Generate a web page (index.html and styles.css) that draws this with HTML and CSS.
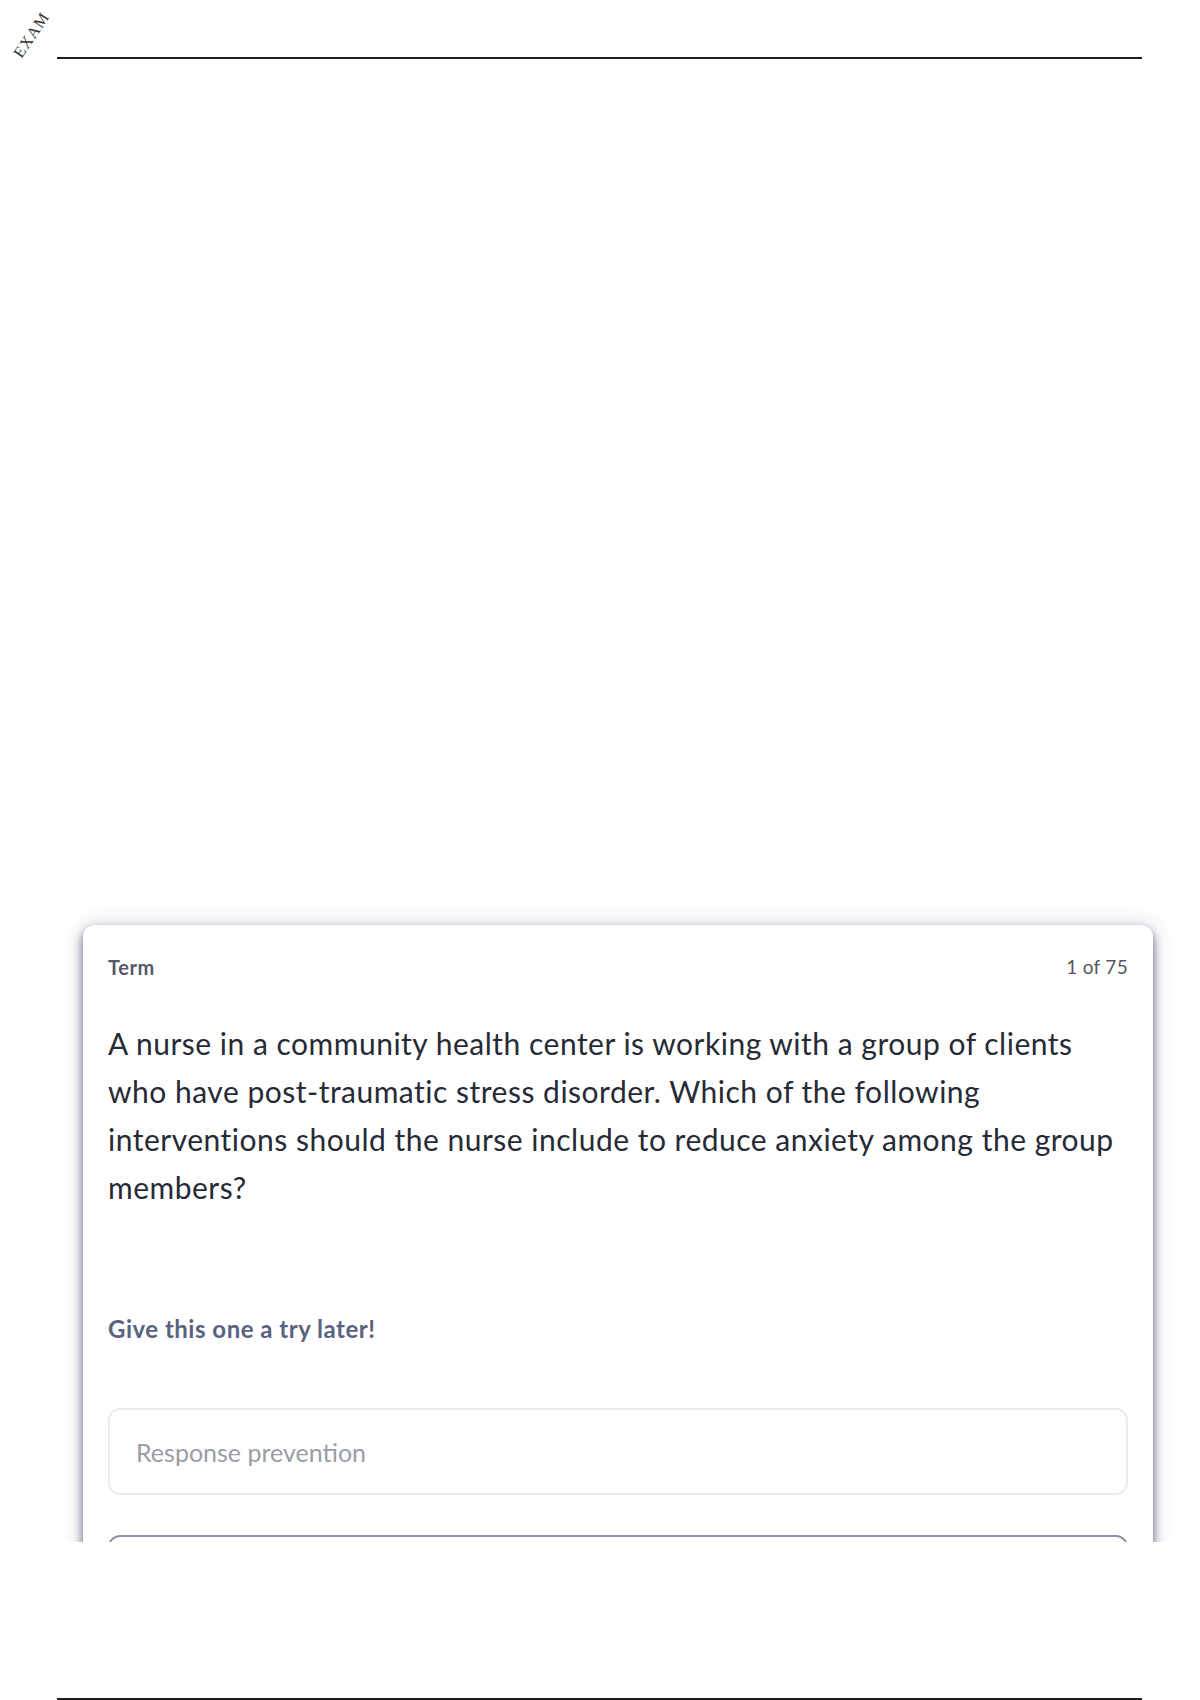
FILE: index.html
```html
<!DOCTYPE html>
<html lang="en">
<head>
    <meta charset="UTF-8">
    <meta name="viewport" content="width=device-width, initial-scale=1.0">
    <title>Exam flashcard</title>
    <link rel="stylesheet" href="styles.css">
</head>
<body>
    <div class="page">
        <!-- watermark in the corner -->
        <span class="stamp">EXAM</span>

        <hr class="rule rule-top">

        <div class="card-clip">
            <div class="card">
                <div class="card-head">
                    <span class="card-label">Term</span>
                    <span class="card-count">1 of 75</span>
                </div>

                <!-- line breaks kept as in the printed card -->
                <p class="question">A nurse in a community health center is working with a group of clients<br>
                    who have post-traumatic stress disorder. Which of the following<br>
                    interventions should the nurse include to reduce anxiety among the group<br>
                    members?</p>

                <p class="hint">Give this one a try later!</p>

                <div class="options">
                    <div class="option">Response prevention</div>
                    <div class="option option-active"></div>
                </div>
            </div>
        </div>

        <hr class="rule rule-bottom">
    </div>
</body>
</html>
```

FILE: styles.css
```css
body {
    margin: 0;
    background: #fff;
    font-family: Lato, "Open Sans", sans-serif;
}
.page {
    position: relative;
    height: 1700px;
    display: flex;
    flex-direction: column;
    overflow: hidden;
}
.stamp {
    position: absolute;
    left: 6px;
    top: 26px;
    font-family: "Liberation Serif", serif;
    font-size: 16px;
    letter-spacing: 1px;
    color: #333;
    transform: rotate(-56deg);
}
.rule {
    border: none;
    height: 2px;
    background: #1e1e1e;
    margin: 0 58px 0 57px;
}
.rule-top {
    margin-top: 57px;
}
.rule-bottom {
    margin-top: auto;
}
.card-clip {
    margin: 831px 0 0 60px;
    width: 1120px;
    height: 652px;
    box-sizing: border-box;
    padding: 35px 27px 0 23px;
    overflow: hidden;
}
.card {
    background: #fff;
    border-radius: 12px;
    padding: 30px 25px 60px;
    box-shadow: 0 5px 10px rgba(50, 52, 95, 0.75), 0 0 22px rgba(50, 52, 95, 0.2);
}
.card-head {
    display: flex;
    justify-content: space-between;
    align-items: center;
    line-height: 24px;
}
.card-label {
    font-size: 20px;
    font-weight: 700;
    letter-spacing: 0.6px;
    color: #555a68;
}
.card-count {
    font-size: 19px;
    letter-spacing: 0.3px;
    color: #55565f;
}
.question {
    margin: 40px 0 0;
    font-size: 30px;
    line-height: 48px;
    letter-spacing: 0.5px;
    color: #262a36;
}
.hint {
    margin: 104px 0 0;
    font-size: 24px;
    line-height: 28px;
    font-weight: 700;
    letter-spacing: 0.5px;
    color: #586380;
}
.options {
    margin-top: 65px;
    display: flex;
    flex-direction: column;
    gap: 40px;
}
.option {
    height: 87px;
    box-sizing: border-box;
    border: 2px solid #ebecf0;
    border-radius: 12px;
    padding: 0 26px;
    display: flex;
    align-items: center;
    font-size: 25px;
    color: #9a9ca6;
}
.option-active {
    border-color: #8f92a8;
}
```
